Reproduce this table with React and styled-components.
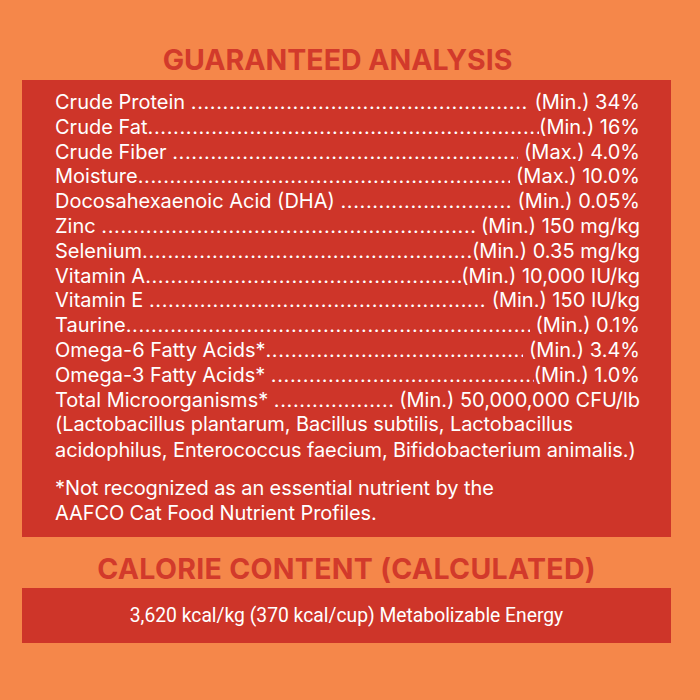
import React from 'react';
import styled, { createGlobalStyle } from 'styled-components';

const Global = createGlobalStyle`
  html, body {
    margin: 0;
    padding: 0;
    background: #f5874a;
  }
`

const Page = styled.div`
  width: 700px;
  height: 700px;
  box-sizing: border-box;
  padding: 44px 29px 0 22px;
  display: flex;
  flex-direction: column;
  background: #f5874a;
  font-family: Inter, "Liberation Sans", sans-serif;
`

const Title = styled.h2`
  margin: 0 0 ${p => p.$gap}px 0;
  padding-right: ${p => p.$shift || 0}px;
  text-align: center;
  color: #d23a2b;
  font-size: 28.5px;
  line-height: 32px;
  font-weight: 700;
  letter-spacing: ${p => p.$spacing || 0}px;
`

const Panel = styled.div`
  background: #ce3529;
  color: #fff;
  padding: ${p => p.$pad};
  margin-bottom: ${p => p.$below || 0}px;
`

const Row = styled.div`
  display: flex;
  align-items: baseline;
  font-size: 20px;
  line-height: 24.8px;
  white-space: pre;
`

const Label = styled.span`
  flex: none;
`

const Leader = styled.span`
  flex: 1;
  overflow: hidden;
  &::after {
    content: "${'.'.repeat(200)}";
    letter-spacing: 0.6px;
  }
`

const Value = styled.span`
  flex: none;
`

const Note = styled.p`
  margin: ${p => p.$top || 0}px 0 0 0;
  font-size: 20px;
  line-height: 25.2px;
  white-space: nowrap;
  letter-spacing: -0.1px;
`

const Energy = styled.div`
  text-align: center;
  font-family: Roboto, "Liberation Sans", sans-serif;
  font-size: 19.3px;
  line-height: 55px;
`

const rows = [
  ['Crude Protein ', ' (Min.) 34%'],
  ['Crude Fat', '(Min.) 16%'],
  ['Crude Fiber ', ' (Max.) 4.0%'],
  ['Moisture', ' (Max.) 10.0%'],
  ['Docosahexaenoic Acid (DHA) ', ' (Min.) 0.05%'],
  ['Zinc ', ' (Min.) 150 mg/kg'],
  ['Selenium', '(Min.) 0.35 mg/kg'],
  ['Vitamin A', '(Min.) 10,000 IU/kg'],
  ['Vitamin E ', ' (Min.) 150 IU/kg'],
  ['Taurine', ' (Min.) 0.1%'],
  ['Omega-6 Fatty Acids*', ' (Min.) 3.4%'],
  ['Omega-3 Fatty Acids* ', '(Min.) 1.0%'],
  ['Total Microorganisms* ', ' (Min.) 50,000,000 CFU/lb'],
]

const App = () => {
  return (
    <>
      <Global />
      <Page>
        <Title $gap={4} $shift={18}>GUARANTEED ANALYSIS</Title>
        <Panel $pad="10px 31px 11px 33px" $below={16}>
          {rows.map(([label, value]) => (
            <Row key={label}>
              <Label>{label}</Label>
              <Leader />
              <Value>{value}</Value>
            </Row>
          ))}
          <Note>
            (Lactobacillus plantarum, Bacillus subtilis, Lactobacillus
            <br />
            acidophilus, Enterococcus faecium, Bifidobacterium animalis.)
          </Note>
          <Note $top={13}>
            *Not recognized as an essential nutrient by the
            <br />
            AAFCO Cat Food Nutrient Profiles.
          </Note>
        </Panel>
        <Title $gap={3} $spacing={0.3}>CALORIE CONTENT (CALCULATED)</Title>
        <Panel $pad="0">
          <Energy>3,620 kcal/kg (370 kcal/cup) Metabolizable Energy</Energy>
        </Panel>
      </Page>
    </>
  )
}

export default App
